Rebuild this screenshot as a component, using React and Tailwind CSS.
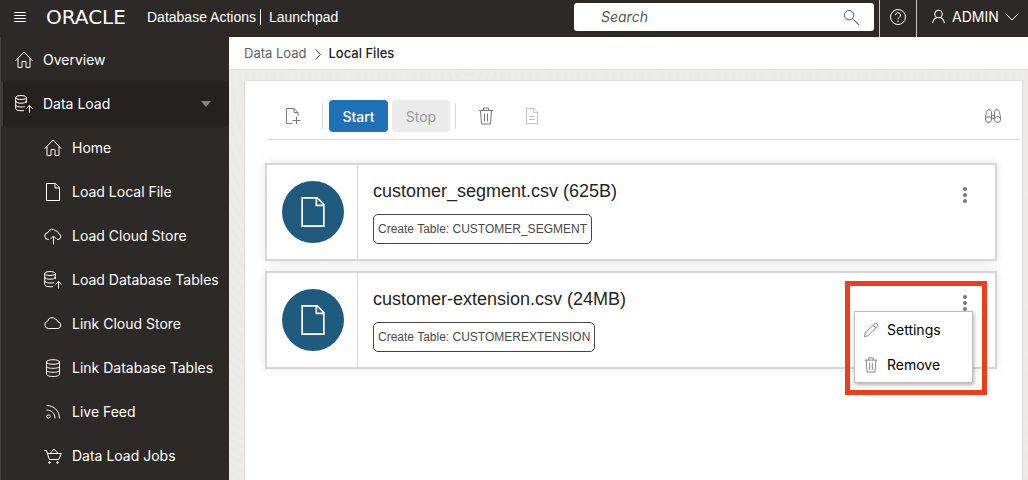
import React from "react";

function Svg({ size = 18, children, className = "", width = 1 }) {
  return (
    <svg
      width={size}
      height={size}
      viewBox="0 0 18 18"
      fill="none"
      stroke="currentColor"
      strokeWidth={width}
      className={"shrink-0 " + className}
      aria-hidden="true"
    >
      {children}
    </svg>
  );
}

const HomeIcon = () => (
  <Svg>
    <path d="M.7 9.7 9 1l8.300 8.700M3 7.500V16.500H7V10.500H11V16.500H15V7.500" />
  </Svg>
);

const FileIcon = ({ size, width }) => (
  <Svg size={size} width={width}>
    <path d="M2.500.500H11.500L15.500 4.500V17.500H2.500ZM11 .700V5H15.300" />
  </Svg>
);

const CloudUpIcon = () => (
  <Svg>
    <path d="M5 12.500H4.500A3.500 3.500 0 0 1 4 5.500 4.300 4.300 0 0 1 11.500 3.800 3 3 0 0 1 14.500 6.600 3 3 0 0 1 14 12.500H13M9.500 17.500V9M6.500 12 9.500 9l3 3" />
  </Svg>
);

const CloudIcon = () => (
  <Svg>
    <path d="M4.300 13.500A3.700 3.700 0 0 1 3.700 6.200 4.300 4.300 0 0 1 11.300 4.200a2.800 2.800 0 0 1 2.600 2.500A3.500 3.500 0 0 1 14.200 13.500Z" />
  </Svg>
);

const DatabaseUpIcon = () => (
  <Svg>
    <ellipse cx="6" cy="2.500" rx="5.300" ry="2" />
    <path d="M.700 2.500V13.500C.700 15 3 15.700 6 15.700H9M11.300 2.500V8M.700 6C.700 7.500 3 8.200 6 8.200S11.300 7.500 11.300 6M.700 9.800C.700 11.300 3 12 6 12S9.500 11.700 10 11.500M14.500 17.500V10.500M11.500 13.500l3-3 3 3" />
  </Svg>
);

const DatabaseIcon = () => (
  <Svg>
    <ellipse cx="9" cy="3" rx="6.500" ry="2.300" />
    <path d="M2.500 3V15C2.500 16.500 5 17.500 9 17.500S15.500 16.500 15.500 15V3M2.500 7C2.500 8.500 5 9.300 9 9.300S15.500 8.500 15.500 7M2.500 11C2.500 12.500 5 13.300 9 13.300S15.500 12.500 15.500 11" />
  </Svg>
);

const FeedIcon = () => (
  <Svg>
    <circle cx="4.500" cy="13.500" r="1.700" />
    <path d="M2.500 2.500C10 2.500 15.500 8 15.500 15.500M2.500 7C7.500 7 11 10.500 11 15.500" />
  </Svg>
);

const CartIcon = () => (
  <Svg>
    <path d="M.300 3.500H2.500L5.300 12.500H14.700L17.300 6.500H3.400M6 6.500 10 2l4 4.500" />
    <circle cx="5.500" cy="15.500" r=".8" fill="currentColor" />
    <circle cx="13.500" cy="15.500" r=".8" fill="currentColor" />
  </Svg>
);

const TrashIcon = ({ size }) => (
  <Svg size={size}>
    <path d="M2 3.500H16M6.500 3.500V1H11.500V3.500M3.500 3.500 4.500 17H13.500L14.500 3.500M7.500 6.500V14.500M10.500 6.500V14.500" />
  </Svg>
);

const FileAddIcon = () => (
  <Svg>
    <path d="M8 16.500H2.500V1.500H10L14 5.500V9M10 1.500V5.500H14M12.500 9.500V17M8.500 13.500H16.500" />
  </Svg>
);

const LogIcon = () => (
  <Svg>
    <path d="M3.500 1.500H11L14.500 5V16.500H3.500ZM10.500 1.500V5.500H14.500M6 9.500H12M6 12.500H12" />
  </Svg>
);

const BinocularsIcon = () => (
  <Svg>
    <circle cx="4.500" cy="12.500" r="3" />
    <circle cx="13.500" cy="12.500" r="3" />
    <path d="M1.500 12.500C1.500 7 3 2.500 5 2.500S7.500 4 7.500 6V12.500M16.500 12.500C16.500 7 15 2.500 13 2.500S10.500 4 10.500 6V12.500M7.500 8.500H10.500M7.500 11.500H10.500" />
  </Svg>
);

const PencilIcon = () => (
  <Svg size={16}>
    <path d="M1.500 16.500 2.500 12.500 13 2A2 2 0 0 1 16 5L5.500 15.500ZM11.500 3.500l3 3" />
  </Svg>
);

const navItems = [
  { label: "Home", icon: HomeIcon },
  { label: "Load Local File", icon: FileIcon },
  { label: "Load Cloud Store", icon: CloudUpIcon },
  { label: "Load Database Tables", icon: DatabaseUpIcon },
  { label: "Link Cloud Store", icon: CloudIcon },
  { label: "Link Database Tables", icon: DatabaseIcon },
  { label: "Live Feed", icon: FeedIcon },
  { label: "Data Load Jobs", icon: CartIcon },
];

function Header() {
  return (
    <header className="flex h-[37px] items-stretch bg-[#2d2926] text-white">
      <div className="flex flex-1 items-center pb-1 pl-3">
        <button type="button" aria-label="Toggle navigation" className="mr-4 p-0.5">
          <svg width="12" height="12" viewBox="0 0 12 12" stroke="currentColor" aria-hidden="true">
            <path d="M0 1.500H12M0 4.500H12M0 7.500H12M0 10.500H12" />
          </svg>
        </button>
        <span className="w-[103px] pl-0.5 font-['DejaVu_Sans'] text-xl leading-5">ORACLE</span>
        <span className="border-r border-white pr-1 font-['Liberation_Sans'] text-sm leading-4 whitespace-nowrap">
          Database Actions
        </span>
        <span className="ml-2 font-['Liberation_Sans'] text-sm leading-4">Launchpad</span>
      </div>
      <div className="mt-[3px] mr-[5px] flex h-7 w-[300px] items-center rounded-[3px] bg-white pr-3.5 pl-[27px] text-[#555]">
        <input
          type="search"
          aria-label="Search"
          placeholder="Search"
          className="min-w-0 flex-1 bg-transparent text-sm italic outline-none placeholder:text-[#555]"
        />
        <Svg size={17}>
          <circle cx="6.500" cy="6.500" r="5" />
          <path d="M10.200 10.200 17 17" />
        </Svg>
      </div>
      <button
        type="button"
        aria-label="Help"
        className="flex w-[37px] items-center justify-center border-l border-[#c8c6c4] pb-1"
      >
        <Svg>
          <circle cx="9" cy="9" r="7.500" />
          <path d="M6.500 7.200A2.500 2.500 0 1 1 10.500 9.200C9.500 9.800 9 10.200 9 11.200M9 12.500V14" />
        </Svg>
      </button>
      <button
        type="button"
        className="flex w-28 items-center gap-1.5 border-l border-[#c8c6c4] pb-1 pl-3.5 text-sm"
      >
        <Svg size={15} width={1.3}>
          <circle cx="9" cy="6" r="4.500" />
          <path d="M2 17C2.500 13 4.500 11 7 10.200M16 17C15.500 13 13.500 11 11 10.200" />
        </Svg>
        ADMIN
        <svg width="14" height="8" viewBox="0 0 14 8" fill="none" stroke="currentColor" aria-hidden="true">
          <path d="M.5.500 7 7 13.500.500" />
        </svg>
      </button>
    </header>
  );
}

function Sidebar() {
  return (
    <nav className="w-[229px] shrink-0 border-l border-[#45413e] bg-[#2d2926] pt-px text-sm text-white">
      <a href="#overview" className="flex h-11 items-center gap-2.5 pl-3.5">
        <HomeIcon />
        Overview
      </a>
      <button
        type="button"
        aria-expanded="true"
        className="flex h-11 w-full items-center gap-2.5 border-l-2 border-[#3d3a38] bg-[#24211e] pr-[18px] pl-3"
      >
        <DatabaseUpIcon />
        <span className="flex-1 text-left">Data Load</span>
        <svg width="10" height="6" viewBox="0 0 10 6" fill="#858281" aria-hidden="true">
          <path d="M0 0H10L5 6Z" />
        </svg>
      </button>
      <ul>
        {navItems.map(({ label, icon: Icon }) => (
          <li key={label}>
            <a href="#item" className="flex h-11 items-center gap-2.5 pl-[43px] whitespace-nowrap">
              <Icon />
              {label}
            </a>
          </li>
        ))}
      </ul>
    </nav>
  );
}

function Toolbar() {
  return (
    <div className="ml-[22px] mr-0.5 flex h-[59px] items-center border-b border-[#dcdcdc] pt-3 pr-[18px] pl-[17px] text-[#77787a]">
      <button type="button" aria-label="Add file">
        <FileAddIcon />
      </button>
      <span className="ml-5 h-[26px] border-l border-[#d8d8d8]" />
      <button type="button" className="ml-1.5 h-8 w-[59px] rounded-sm bg-[#2070b8] pt-0.5 text-sm font-medium text-white">
        Start
      </button>
      <button type="button" disabled className="ml-1 h-8 w-[58px] rounded-sm bg-[#ebebeb] pt-0.5 text-sm text-[#9a9a9a]">
        Stop
      </button>
      <span className="ml-[5px] h-[26px] border-l border-[#d8d8d8]" />
      <button type="button" aria-label="Delete" className="ml-[21px]">
        <TrashIcon size={18} />
      </button>
      <button type="button" aria-label="Log" disabled className="ml-7 text-[#c4c4c4]">
        <LogIcon />
      </button>
      <button type="button" aria-label="Find" className="ml-auto">
        <BinocularsIcon />
      </button>
    </div>
  );
}

function ActionMenu() {
  return (
    <>
      <div className="pointer-events-none absolute -top-2.5 -right-2.5 h-[114px] w-[142px] border-5 border-[#f23a1d]" />
      <ul
        role="menu"
        className="absolute top-5 right-1 w-[119px] border border-[#bdbdbd] bg-white text-sm text-black shadow-[1px_2px_4px_rgba(0,0,0,0.3)]"
      >
        <li role="none">
          <button type="button" role="menuitem" className="flex h-[35px] w-full items-center gap-2 pl-2">
            <span className="text-[#77787a]"><PencilIcon /></span>
            Settings
          </button>
        </li>
        <li role="none">
          <button type="button" role="menuitem" className="flex h-[35px] w-full items-center gap-2 pl-2">
            <span className="text-[#77787a]"><TrashIcon size={16} /></span>
            Remove
          </button>
        </li>
      </ul>
    </>
  );
}

function FileCard({ name, table, menuOpen }) {
  return (
    <article className="flex h-[98px] items-stretch border-2 border-[#d6d6d6] bg-white shadow-[0_0_10px_rgba(0,0,0,0.1)]">
      <div className="flex w-[91px] shrink-0 items-center border-r border-[#d6d6d6] pl-[15px]">
        <div className="flex size-[62px] items-center justify-center rounded-full bg-[#1f5b7f] text-white">
          <FileIcon size={30} width={1} />
        </div>
      </div>
      <div className="min-w-0 flex-1 pt-3.5 pl-[15px] font-['Liberation_Sans']">
        <h2 className="text-lg leading-6 text-[#252525]">{name}</h2>
        <span className="mt-[11px] inline-flex h-[30px] items-center rounded-[5px] border border-[#444] px-1 text-xs whitespace-nowrap text-[#4a4a4a]">
          Create Table: {table}
        </span>
      </div>
      <div className="relative mt-[18px] mr-[18px] size-6">
        <button
          type="button"
          aria-label={"Actions for " + name}
          aria-haspopup="menu"
          className="flex size-6 items-center justify-center text-[#77787a]"
        >
          <svg width="4" height="16" viewBox="0 0 4 16" fill="currentColor" aria-hidden="true">
            <circle cx="2" cy="2" r="2" />
            <circle cx="2" cy="8" r="2" />
            <circle cx="2" cy="14" r="2" />
          </svg>
        </button>
        {menuOpen && <ActionMenu />}
      </div>
    </article>
  );
}

export default function App() {
  return (
    <div className="flex min-h-screen flex-col bg-white font-['Inter',sans-serif]">
      <Header />
      <div className="flex flex-1">
        <Sidebar />
        <div className="flex min-w-0 flex-1 flex-col">
          <nav className="flex h-[33px] items-center gap-2 border-b border-[#dedddc] pt-0.5 pl-[15px] text-[13px] text-[#606060]">
            <a href="#data-load">Data Load</a>
            <svg width="6" height="11" viewBox="0 0 6 11" fill="none" stroke="#444" aria-hidden="true">
              <path d="M.5.500 5.500 5.500.5 10.500" />
            </svg>
            <span className="font-medium text-[#222]">Local Files</span>
          </nav>
          <div className="flex flex-1 flex-col bg-[#edecea] bg-[repeating-radial-gradient(circle_at_30%_0%,#edecea_0_4px,#ebeae8_5px_6px,#edecea_7px)] pt-2.5 pr-[5px] pl-[15px]">
            <main className="flex-1 border border-b-0 border-[#dcdcdc] bg-white">
              <Toolbar />
              <div className="mt-[23px] mr-[25px] ml-5 flex flex-col gap-2.5">
                <FileCard name="customer_segment.csv (625B)" table="CUSTOMER_SEGMENT" />
                <FileCard name="customer-extension.csv (24MB)" table="CUSTOMEREXTENSION" menuOpen />
              </div>
            </main>
          </div>
        </div>
      </div>
    </div>
  );
}
